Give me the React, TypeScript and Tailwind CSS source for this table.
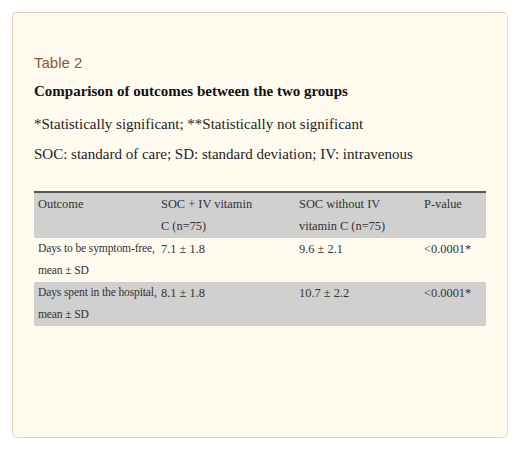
const rows = [
  { outcome: ["Days to be symptom-free,", "mean ± SD"], a: "7.1 ± 1.8", b: "9.6 ± 2.1", p: "<0.0001*" },
  { outcome: ["Days spent in the hospital,", "mean ± SD"], a: "8.1 ± 1.8", b: "10.7 ± 2.2", p: "<0.0001*" },
];

const App = () => {
  return (
    <div className="w-[517px] h-[450px] bg-white p-[12px] pr-[9px] pb-[12px]">
      <div className="h-[426px] rounded-[5px] border border-[#ecc9b3] border-r-[#e3ddd2] border-b-[#e8d2c2] bg-[#fffcef] px-[21px] pt-[40px] text-[#222]">
        <p className="font-['Liberation_Sans',Arial,sans-serif] text-[15px] leading-[20px] text-[#8b5a3c]">Table 2</p>
        <p className="mt-[8px] font-['Liberation_Serif','Times_New_Roman',serif] text-[15px] font-bold leading-[20px] text-[#111]">
          Comparison of outcomes between the two groups
        </p>
        <p className="mt-[13px] font-['Liberation_Serif','Times_New_Roman',serif] text-[15px] leading-[20px]">
          *Statistically significant; **Statistically not significant
        </p>
        <p className="mt-[10px] font-['Liberation_Serif','Times_New_Roman',serif] text-[15px] leading-[20px]">
          SOC: standard of care; SD: standard deviation; IV: intravenous
        </p>
        <table className="mt-[27px] w-[452px] table-fixed border-collapse font-['Liberation_Serif','Times_New_Roman',serif] text-[12.4px] leading-[22px] text-[#333]">
          <thead>
            <tr className="border-t-2 border-[#555] bg-[#d0d0d0] align-top text-left">
              <th className="w-[123px] px-[4px] pb-[1px] font-normal">Outcome</th>
              <th className="w-[138px] px-[4px] pb-[1px] font-normal">SOC + IV vitamin<br />C (n=75)</th>
              <th className="w-[125px] px-[4px] pb-[1px] font-normal">SOC without IV<br />vitamin C (n=75)</th>
              <th className="px-[4px] pb-[1px] font-normal">P-value</th>
            </tr>
          </thead>
          <tbody>
            {rows.map((r, i) => (
              <tr key={i} className={i % 2 === 1 ? "bg-[#d0d0d0] align-top" : "align-top"}>
                <td className="whitespace-nowrap px-[4px] text-[11.6px] tracking-[-0.15px]">{r.outcome[0]}<br />{r.outcome[1]}</td>
                <td className="px-[4px]">{r.a}</td>
                <td className="px-[4px]">{r.b}</td>
                <td className="px-[4px]">{r.p}</td>
              </tr>
            ))}
          </tbody>
        </table>
      </div>
    </div>
  );
};

export default App;
